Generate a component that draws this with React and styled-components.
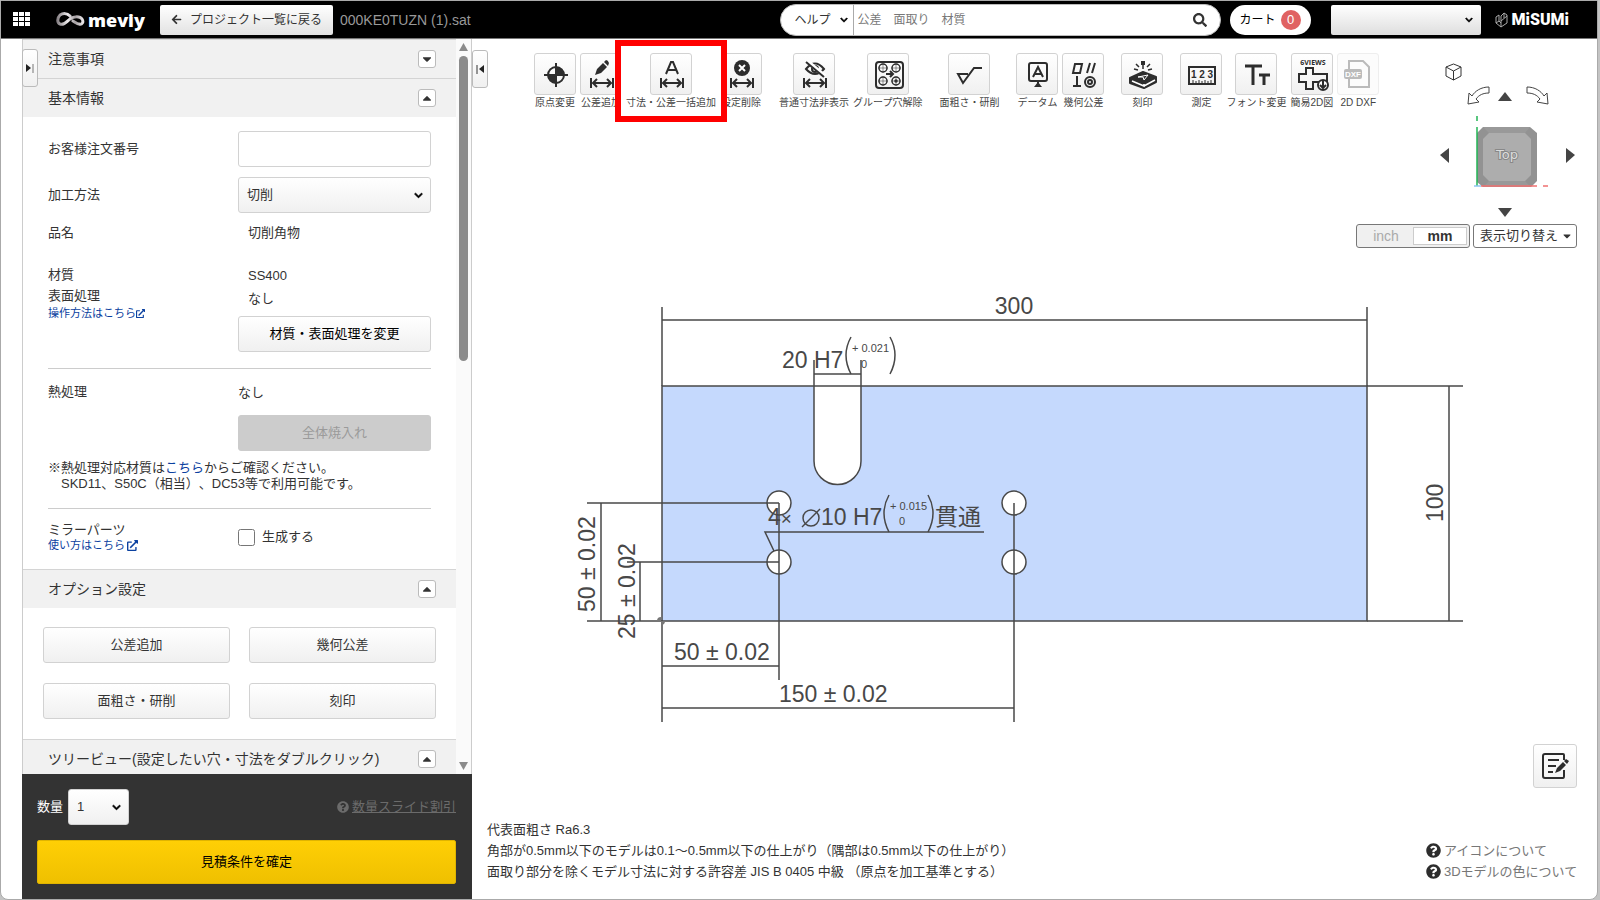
import React from "react";
import styled, { createGlobalStyle, css } from "styled-components";
import {
  FaArrowLeft,
  FaCaretDown,
  FaCaretUp,
  FaChevronDown,
  FaExternalLinkAlt,
  FaQuestionCircle,
  FaSearch,
} from "react-icons/fa";

const tools = [
  [
    { label: "原点変更", icon: <OriginIcon /> },
    { label: "公差追加", icon: <ToleranceIcon /> },
    { label: "寸法・公差一括追加", icon: <BulkIcon />, marked: true },
    { label: "設定削除", icon: <DeleteIcon /> },
  ],
  [
    { label: "普通寸法非表示", icon: <HideIcon /> },
    { label: "グループ穴解除", icon: <GroupHoleIcon /> },
  ],
  [{ label: "面粗さ・研削", icon: <RoughnessIcon /> }],
  [
    { label: "データム", icon: <DatumIcon /> },
    { label: "幾何公差", icon: <GeometricIcon /> },
  ],
  [{ label: "刻印", icon: <EngraveIcon /> }],
  [
    { label: "測定", icon: <MeasureIcon /> },
    { label: "フォント変更", icon: <FontIcon /> },
    { label: "簡易2D図", icon: <SixViewsIcon /> },
    { label: "2D DXF", icon: <DxfIcon />, disabled: true },
  ],
];

const options = ["公差追加", "幾何公差", "面粗さ・研削", "刻印"];

export default function App() {
  return (
    <>
      <GlobalStyle />
      <Window>
        <Header />
        <Body>
          <Sidebar />
          <Viewer />
        </Body>
      </Window>
    </>
  );
}

function Header() {
  return (
    <TopBar>
      <MenuButton aria-label="メニュー">
        <svg width="17" height="15" viewBox="0 0 17 15" fill="#fff">
          {[0, 6, 12].map((x) =>
            [0, 5, 10].map((y) => (
              <rect key={`${x}-${y}`} x={x} y={y} width="5" height="4" />
            ))
          )}
        </svg>
      </MenuButton>
      <Brand href="#">
        <svg width="30" height="16" viewBox="0 0 30 16" fill="none">
          <defs>
            <linearGradient id="loop" x1="0" x2="1" y1="0" y2="0">
              <stop offset="0" stopColor="#8a8488" />
              <stop offset="0.4" stopColor="#efecee" />
              <stop offset="0.7" stopColor="#a39da0" />
              <stop offset="1" stopColor="#e8e4e6" />
            </linearGradient>
          </defs>
          <path
            d="M14 4C11 1 7 1 4 3C1 6 1 11 4 12C8 14 11 9 14 7C18 4 24 4 26 7C28 10 26 13 23 12C21 12 19 10 17 9"
            stroke="url(#loop)"
            strokeWidth="3"
            strokeLinecap="round"
          />
        </svg>
        meviy
      </Brand>
      <BackButton>
        <FaArrowLeft size={11} />
        プロジェクト一覧に戻る
      </BackButton>
      <FileName>000KE0TUZN (1).sat</FileName>
      <SearchBox>
        <HelpLabel>
          <HelpSelect aria-label="検索対象">
            <option>ヘルプ</option>
          </HelpSelect>
          <FaChevronDown size={8} />
        </HelpLabel>
        <input type="text" aria-label="検索" placeholder="公差　面取り　材質" />
        <button aria-label="検索する">
          <FaSearch size={14} />
        </button>
      </SearchBox>
      <CartButton>
        カート<span>0</span>
      </CartButton>
      <AccountWrap>
        <Select aria-label="アカウント" $flat>
          <option></option>
        </Select>
        <FaChevronDown size={8} />
      </AccountWrap>
      <Maker href="#">
        <svg
          width="13"
          height="16"
          viewBox="0 0 13 16"
          fill="none"
          stroke="#aaa"
        >
          <path d="M1 5L4 3V9L1 11ZM1 11L6 15L12 11V3L9 1L6 4V15M6 9L12 4M4 9L6 11M9 1V6" />
        </svg>
        MiSUMi
      </Maker>
    </TopBar>
  );
}

function SectionHead({ title, open }) {
  return (
    <Head>
      <h2>{title}</h2>
      <Toggle aria-label={title} aria-expanded={open}>
        {open ? <FaCaretUp size={14} /> : <FaCaretDown size={14} />}
      </Toggle>
    </Head>
  );
}

function Sidebar() {
  return (
    <Side>
      <SideScroll>
        <SideContent>
          <SectionHead title="注意事項" open={false} />
          <SectionHead title="基本情報" open />
          <BasicInfo>
            <Field>
              <label htmlFor="order">お客様注文番号</label>
              <TextInput id="order" type="text" />
            </Field>
            <Field>
              <label htmlFor="process">加工方法</label>
              <SelectWrap>
                <Select id="process">
                  <option>切削</option>
                </Select>
                <FaChevronDown size={9} />
              </SelectWrap>
            </Field>
            <Field>
              <span>品名</span>
              <Value>切削角物</Value>
            </Field>
            <Material>
              <LeftStack>
                <div>材質</div>
                <div>表面処理</div>
                <SmallLink href="#">
                  操作方法はこちら
                  <FaExternalLinkAlt size={9} />
                </SmallLink>
              </LeftStack>
              <RightStack>
                <Value>SS400</Value>
                <Value>なし</Value>
                <ChangeButton>材質・表面処理を変更</ChangeButton>
              </RightStack>
            </Material>
            <Rule />
            <Heat>
              <LeftStack>熱処理</LeftStack>
              <RightStack>
                <div>なし</div>
                <HeatButton disabled>全体焼入れ</HeatButton>
              </RightStack>
            </Heat>
            <Note>
              ※熱処理対応材質は<a href="#">こちら</a>からご確認ください。
              <br />
              {"\u3000SKD11、S50C（相当）、DC53等で利用可能です。"}
            </Note>
            <Rule />
            <Mirror>
              <div>
                ミラーパーツ
                <SmallLink href="#" $spaced>
                  使い方はこちら
                  <FaExternalLinkAlt size={11} />
                </SmallLink>
              </div>
              <CheckLabel>
                <input type="checkbox" />
                生成する
              </CheckLabel>
            </Mirror>
          </BasicInfo>
          <SectionHead title="オプション設定" open />
          <OptionGrid>
            {options.map((name) => (
              <PlainButton key={name}>{name}</PlainButton>
            ))}
          </OptionGrid>
          <SectionHead title="ツリービュー(設定したい穴・寸法をダブルクリック)" open />
        </SideContent>
        <Scrollbar>
          <svg width="9" height="8" viewBox="0 0 9 8" fill="#8b8b8b">
            <path d="M4.500 0L9 8H0Z" />
          </svg>
          <Thumb />
          <svg width="9" height="8" viewBox="0 0 9 8" fill="#8b8b8b">
            <path d="M0 0H9L4.500 8Z" />
          </svg>
        </Scrollbar>
      </SideScroll>
      <Order>
        <OrderRow>
          <label htmlFor="qty">数量</label>
          <QtyWrap>
            <Select id="qty">
              <option>1</option>
            </Select>
            <FaChevronDown size={9} />
          </QtyWrap>
          <DiscountLink href="#">
            <FaQuestionCircle size={12} />
            <span>数量スライド割引</span>
          </DiscountLink>
        </OrderRow>
        <ConfirmButton>見積条件を確定</ConfirmButton>
      </Order>
      <SideHandle aria-label="パネルを開く">
        <svg width="8" height="9" viewBox="0 0 8 9">
          <path d="M0 0L5 4L0 8Z" fill="#222" />
          <path d="M7 0V9" stroke="#777" />
        </svg>
      </SideHandle>
    </Side>
  );
}

function Viewer() {
  return (
    <Main>
      <ViewerTop>
        <MainHandle aria-label="パネルを閉じる">
          <svg width="8" height="9" viewBox="0 0 8 9">
            <path d="M8 0L3 4L8 8Z" fill="#222" />
            <path d="M1 0V9" stroke="#333" />
          </svg>
        </MainHandle>
        <Toolbar>
          {tools.map((group) => (
            <ToolGroup key={group[0].label}>
              {group.map((tool) => (
                <Tool
                  key={tool.label}
                  $marked={tool.marked}
                  disabled={tool.disabled}
                >
                  <ToolFace>{tool.icon}</ToolFace>
                  <ToolName>{tool.label}</ToolName>
                </Tool>
              ))}
            </ToolGroup>
          ))}
        </Toolbar>
        <ViewCompass />
      </ViewerTop>
      <UnitRow>
        <UnitSwitch>
          <button>inch</button>
          <button aria-pressed="true">mm</button>
        </UnitSwitch>
        <DisplayButton>
          表示切り替え
          <FaCaretDown size={12} />
        </DisplayButton>
      </UnitRow>
      <Drawing />
      <ViewerBottom>
        <Remarks>
          <p>代表面粗さ Ra6.3</p>
          <p>
            角部が0.5mm以下のモデルは0.1〜0.5mm以下の仕上がり（隅部は0.5mm以下の仕上がり）
          </p>
          <p>
            面取り部分を除くモデル寸法に対する許容差 JIS B 0405 中級
            （原点を加工基準とする）
          </p>
        </Remarks>
        <BottomRight>
          <NoteButton aria-label="メモ">
            <NoteIcon />
          </NoteButton>
          <HelpLinks>
            <a href="#">
              <FaQuestionCircle size={15} />
              アイコンについて
            </a>
            <a href="#">
              <FaQuestionCircle size={15} />
              3Dモデルの色について
            </a>
          </HelpLinks>
        </BottomRight>
      </ViewerBottom>
    </Main>
  );
}

function ViewCompass() {
  return (
    <Compass>
      <IconButton aria-label="等角図" $area="iso">
        <svg width="17" height="18" viewBox="0 0 17 18" fill="none" stroke="#333">
          <path d="M8.500 1L16 4V13L8.500 17L1 13V4ZM1 4L8.500 8L16 4M8.500 8V17" />
        </svg>
      </IconButton>
      <IconButton aria-label="左回転" $area="ccw">
        <svg width="24" height="20" viewBox="0 0 24 20" fill="none" stroke="#444">
          <path d="M22 1C14 1 8 5 5 10L2 7L1 18L12 16L9 13C12 9 16 7 22 7Z" />
        </svg>
      </IconButton>
      <IconButton aria-label="上" $area="up">
        <svg width="14" height="9" viewBox="0 0 14 9" fill="#444">
          <path d="M7 0L14 9H0Z" />
        </svg>
      </IconButton>
      <IconButton aria-label="右回転" $area="cw">
        <svg width="24" height="20" viewBox="0 0 24 20" fill="none" stroke="#444">
          <path d="M2 1C10 1 16 5 19 10L22 7L23 18L12 16L15 13C12 9 8 7 2 7Z" />
        </svg>
      </IconButton>
      <IconButton aria-label="左" $area="left">
        <svg width="9" height="15" viewBox="0 0 9 15" fill="#444">
          <path d="M9 0V15L0 7Z" />
        </svg>
      </IconButton>
      <IconButton aria-label="Top" $area="cube">
        <svg width="82" height="80" viewBox="0 0 82 80">
          <path d="M10 18L16 12H63L70 18V66L64 72H16L10 67Z" fill="#929292" />
          <path d="M16 12H63L58 18H22ZM22 66H58L64 72H16Z" fill="#999" />
          <path d="M22 18H58L64 24V60L58 66H22L16 60V24Z" fill="#adadad" />
          <text
            x="40"
            y="44"
            textAnchor="middle"
            fontFamily="DejaVu Sans, sans-serif"
            fontSize="13"
            fill="#dcdcdc"
            stroke="#888"
            strokeWidth="2"
            paintOrder="stroke"
          >
            Top
          </text>
          <path d="M10 1V6M10 12V71" stroke="#22b455" strokeWidth="1.500" />
          <path d="M14 71H70M76 71H81" stroke="#f07070" strokeWidth="1.500" />
          <path d="M7 71H14" stroke="#8fc4f0" strokeWidth="1.500" />
        </svg>
      </IconButton>
      <IconButton aria-label="右" $area="right">
        <svg width="9" height="15" viewBox="0 0 9 15" fill="#444">
          <path d="M0 0L9 7L0 15Z" />
        </svg>
      </IconButton>
      <IconButton aria-label="下" $area="down">
        <svg width="14" height="9" viewBox="0 0 14 9" fill="#444">
          <path d="M0 0H14L7 9Z" />
        </svg>
      </IconButton>
    </Compass>
  );
}

// Plate drawing, origin at the top left corner of the plate
function Drawing() {
  const holes = [
    [117, 117],
    [117, 176],
    [352, 117],
    [352, 176],
  ];
  return (
    <Sheet viewBox="-190 -136 1125 494" role="img" aria-label="2D図面">
      <rect x="0" y="0" width="705" height="235" fill="#c5d9fd" />
      <path d="M152 0V75A23.500 23.500 0 0 0 199 75V0Z" fill="#fff" />
      {holes.map(([x, y]) => (
        <circle key={`${x}-${y}`} cx={x} cy={y} r="12" fill="#fff" />
      ))}
      <g fill="none" stroke="#484848" strokeWidth="1.500">
        <path d="M0 0V235H705V0Z" />
        <path d="M152 0V75A23.500 23.500 0 0 0 199 75V0" />
        <path d="M0 0V-79M705 0V-79M0 -66H705" />
        <path d="M152 0V-26M199 0V-26M152 -12H199" />
        <path d="M705 0H801M705 235H801M787 0V235" />
        <path d="M-75 117H117M-75 235H0M-61 117V235" />
        <path d="M-35 176H117M-22 176V235" />
        <path d="M117 117V294M0 280H117" />
        <path d="M352 117V336M0 235V336M0 322H352" />
        <path d="M322 146H103L112 165" />
        <path d="M189 -49Q179 -31 189 -12M228 -49Q238 -31 228 -12" />
        <path d="M227 109Q217 127 227 146M266 109Q276 127 266 146" />
        <circle cx="149" cy="132" r="8" />
        <path d="M140 141L158 123" />
        {holes.map(([x, y]) => (
          <circle key={`${x}-${y}`} cx={x} cy={y} r="12" />
        ))}
      </g>
      <path d="M-5 235A4 4 0 0 1 -1 231V235H3A4 4 0 0 1 -1 239V235Z" fill="#777" />
      <g fill="#484848" fontSize="23">
        <text x="352" y="-72" textAnchor="middle">
          300
        </text>
        <text x="120" y="-18">
          20 H7
        </text>
        <text x="106" y="139">
          4<tspan fontSize="19">×</tspan>
        </text>
        <text x="159" y="139">
          10 H7
        </text>
        <text x="273" y="139">
          貫通
        </text>
        <text x="12" y="274">
          50 ± 0.02
        </text>
        <text x="117" y="316">
          150 ± 0.02
        </text>
        <text transform="translate(-67 226) rotate(-90)">50 ± 0.02</text>
        <text transform="translate(-27 253) rotate(-90)">25 ± 0.02</text>
        <text transform="translate(781 136) rotate(-90)">100</text>
      </g>
      <g fill="#484848" fontSize="11">
        <text x="190" y="-34">
          + 0.021
        </text>
        <text x="199" y="-18">
          0
        </text>
        <text x="228" y="124">
          + 0.015
        </text>
        <text x="237" y="139">
          0
        </text>
      </g>
    </Sheet>
  );
}

/* ---- tool icons, all on a 42 x 42 grid ---- */

function Icon({ children }) {
  return (
    <svg
      width="42"
      height="42"
      viewBox="0 0 42 42"
      fill="none"
      stroke="#2d2d2d"
      strokeWidth="2"
    >
      {children}
    </svg>
  );
}

function Span() {
  return (
    <path d="M10 24V34M32 24V34M12 29H30M16 25L12 29L16 33M26 25L30 29L26 33" />
  );
}

function OriginIcon() {
  return (
    <Icon>
      <circle cx="21" cy="21" r="8" />
      <path d="M21 21V13A8 8 0 0 1 29 21ZM21 21V29A8 8 0 0 1 13 21Z" fill="#2d2d2d" stroke="none" />
      <path d="M21 9V33M9 21H33" />
    </Icon>
  );
}

function ToleranceIcon() {
  return (
    <Icon>
      <path d="M14 21L16 15L22 9L26 13L20 19ZM23 8L25 6Q27 6 28 9L27 12Z" fill="#2d2d2d" stroke="none" />
      <Span />
    </Icon>
  );
}

function BulkIcon() {
  return (
    <Icon>
      <path d="M15 20L20 8H22L27 20M17 16H25" />
      <Span />
    </Icon>
  );
}

function DeleteIcon() {
  return (
    <Icon>
      <circle cx="21" cy="14" r="8" fill="#2d2d2d" stroke="none" />
      <path d="M18 11L24 17M24 11L18 17" stroke="#fff" />
      <Span />
    </Icon>
  );
}

function HideIcon() {
  return (
    <Icon>
      <path d="M12 15Q21 4 30 15Q21 25 12 15Z" />
      <circle cx="21" cy="15" r="3" />
      <path d="M13 7L31 22" stroke="#fff" strokeWidth="4" />
      <path d="M12 8L30 23" />
      <Span />
    </Icon>
  );
}

function GroupHoleIcon() {
  return (
    <Icon>
      <rect x="8" y="8" width="27" height="26" rx="3" />
      <g strokeWidth="1.500">
        <circle cx="15" cy="14" r="4" />
        <circle cx="28" cy="14" r="4" />
        <circle cx="15" cy="27" r="4" />
        <circle cx="28" cy="27" r="4" />
        <circle cx="28" cy="27" r="1" />
        <path d="M15 9V19M10 14H20M28 9V19M23 14H33M15 22V32M10 27H20M28 22V32M23 27H33" strokeWidth="0.500" />
      </g>
      <path d="M18 20H25M22 17L25 20L22 23" />
    </Icon>
  );
}

function RoughnessIcon() {
  return (
    <Icon>
      <path d="M19 20H9L14 29L25 14H33" />
    </Icon>
  );
}

function DatumIcon() {
  return (
    <Icon>
      <rect x="12" y="9" width="18" height="18" rx="2" />
      <path d="M16 23L21 13L26 23M18 20H24M21 27V30" />
      <path d="M21 28L25 33H17Z" fill="#2d2d2d" stroke="none" />
    </Icon>
  );
}

function GeometricIcon() {
  return (
    <Icon>
      <path d="M10 19L12 10H19L17 19ZM24 19L27 9M29 19L32 9M10 32H18M14 22V32" />
      <circle cx="27" cy="28" r="5" />
      <circle cx="27" cy="28" r="2" />
    </Icon>
  );
}

function EngraveIcon() {
  return (
    <Icon>
      <path d="M8 24L21 18L34 23V28L22 34L8 29Z" fill="#2d2d2d" strokeLinejoin="round" />
      <path d="M10 27L22 32V30M22 32L33 26" stroke="#fff" strokeWidth="1.500" />
      <path d="M16 23L26 21L22 26L21 23Z" stroke="#fff" strokeWidth="1" />
      <path d="M21 7V11" strokeWidth="4" />
      <path d="M21 11V15M14 10L17 13M12 15L16 16M28 10L25 13M30 15L26 16" strokeWidth="1.500" />
    </Icon>
  );
}

function MeasureIcon() {
  return (
    <Icon>
      <rect x="8" y="13" width="26" height="17" />
      <path d="M12 30V26M15 30V27M18 30V26M21 30V27M24 30V26M27 30V27M30 30V26" strokeWidth="1" />
      <text x="21" y="24" textAnchor="middle" fontSize="10" fontWeight="700" fill="#2d2d2d" stroke="none">
        1 2 3
      </text>
    </Icon>
  );
}

function FontIcon() {
  return (
    <Icon>
      <path d="M9 12H26M17 12V31M23 21H34M28 21V31" strokeWidth="3" />
    </Icon>
  );
}

function SixViewsIcon() {
  return (
    <Icon>
      <text
        x="21"
        y="11"
        textAnchor="middle"
        fontFamily="Open Sans, sans-serif"
        fontSize="7"
        fontWeight="700"
        fill="#2d2d2d"
        stroke="none"
      >
        6VIEWS
      </text>
      <path d="M14 14H21V20H35V28H21V35H14V28H7V20H14Z" />
      <circle cx="31" cy="31" r="5" fill="#fff" />
      <path d="M31 27V34M28 31L31 34L34 31" />
    </Icon>
  );
}

function DxfIcon() {
  return (
    <Icon>
      <path d="M11 16V7H25L31 13V33H11V24" stroke="#bbb" />
      <rect x="6" y="15" width="18" height="10" rx="2" fill="#bbb" stroke="none" />
      <text x="15" y="23" textAnchor="middle" fontSize="8" fontWeight="700" fill="#fff" stroke="none">
        DXF
      </text>
    </Icon>
  );
}

function NoteIcon() {
  return (
    <svg width="28" height="28" viewBox="0 0 28 28" fill="none" stroke="#2d2d2d" strokeWidth="2">
      <path d="M23 8V3Q23 2 22 2H4Q2 2 2 4V24Q2 26 4 26H22Q23 26 23 24V18" />
      <path d="M7 8H18M7 14H15M7 20H12" />
      <path d="M14 21L16 16L22 10L25 13L19 19ZM23 9L25 7L28 9L26 12Z" fill="#2d2d2d" stroke="none" />
    </svg>
  );
}

/* ---- styles ---- */

const GlobalStyle = createGlobalStyle`
  * {
    box-sizing: border-box;
  }
  body {
    margin: 0;
    background: #c4c4c4;
    color: #333;
    font-family: "Liberation Sans", "Noto Sans CJK JP", sans-serif;
    font-size: 13px;
    line-height: 20px;
    text-spacing-trim: space-all;
  }
  button, input, select {
    margin: 0;
    font: inherit;
    color: inherit;
  }
  button {
    padding: 0;
    cursor: pointer;
  }
  a {
    color: #0b41a0;
    text-decoration: none;
  }
  svg {
    display: block;
    flex: none;
  }
`;

const raised = css`
  background: linear-gradient(#fff, #f0f0f0);
  border: 1px solid #d2d2d2;
  border-radius: 3px;
`;

const Window = styled.div`
  display: flex;
  flex-direction: column;
  height: 100vh;
  margin-right: 2px;
  border: 1px solid #aaa;
  border-radius: 0 0 8px 8px;
  background: #fff;
  overflow: hidden;
`;

const TopBar = styled.header`
  display: flex;
  align-items: center;
  flex: none;
  height: 38px;
  padding: 0 28px 0 12px;
  background: #000;
  border-bottom: 1px solid #777;
  font-size: 12px;
`;

const MenuButton = styled.button`
  border: 0;
  background: none;
`;

const Brand = styled.a`
  display: flex;
  align-items: center;
  gap: 2px;
  width: 104px;
  margin-left: 26px;
  color: #fff;
  font-family: "Open Sans", sans-serif;
  font-size: 18px;
  font-weight: 800;
`;

const BackButton = styled.button`
  display: flex;
  align-items: center;
  justify-content: center;
  gap: 8px;
  width: 173px;
  height: 30px;
  border: 0;
  border-radius: 2px;
  background: linear-gradient(#fff, #e2e2e2);
`;

const FileName = styled.span`
  margin-left: 7px;
  color: #999;
  font-size: 14px;
`;

const SearchBox = styled.div`
  display: flex;
  align-items: center;
  width: 441px;
  height: 32px;
  margin-left: auto;
  padding-right: 13px;
  border: 1px solid #bbb;
  border-radius: 16px;
  background: #fff;
  overflow: hidden;
  input {
    flex: 1;
    padding: 0 4px;
    border: 0;
    outline: 0;
  }
  input::placeholder {
    color: #777;
    opacity: 1;
  }
  button {
    border: 0;
    background: none;
  }
`;

const SelectWrap = styled.div`
  position: relative;
  svg {
    position: absolute;
    top: 50%;
    right: 8px;
    margin-top: -4px;
    color: #000;
    stroke: #000;
    stroke-width: 40px;
    pointer-events: none;
  }
`;

const HelpLabel = styled(SelectWrap)`
  width: 73px;
  height: 30px;
  border-right: 1px solid #aaa;
  svg {
    right: 5px;
  }
`;

const HelpSelect = styled.select`
  width: 100%;
  height: 30px;
  padding-left: 14px;
  border: 0;
  background: none;
  appearance: none;
`;

const CartButton = styled.button`
  display: flex;
  align-items: center;
  justify-content: space-between;
  width: 81px;
  height: 30px;
  margin-left: 9px;
  padding: 0 10px;
  border: 0;
  border-radius: 15px;
  background: #fff;
  color: #000;
  span {
    width: 20px;
    border-radius: 10px;
    background: #e06262;
    color: #fff;
    font-size: 13px;
  }
`;

const AccountWrap = styled(SelectWrap)`
  width: 150px;
  margin-left: 20px;
`;

const Select = styled.select`
  ${raised}
  display: block;
  width: 100%;
  height: 36px;
  padding: 0 8px;
  appearance: none;
  ${(props) =>
    props.$flat &&
    css`
      height: 30px;
      border: 0;
      border-radius: 2px;
      background: linear-gradient(#fff, #dedede);
    `}
`;

const Maker = styled.a`
  display: flex;
  align-items: center;
  gap: 4px;
  margin-left: 14px;
  color: #fff;
  font-family: Roboto, sans-serif;
  font-size: 16px;
  font-weight: 900;
`;

const Body = styled.div`
  display: flex;
  flex: 1;
  min-height: 0;
`;

const Side = styled.aside`
  position: relative;
  display: flex;
  flex-direction: column;
  flex: none;
  width: 450px;
  margin-left: 21px;
  border: 1px solid #ccc;
  border-width: 0 1px;
`;

const SideScroll = styled.div`
  display: flex;
  flex: 1;
  min-height: 0;
`;

const SideContent = styled.div`
  flex: 1;
  overflow: hidden;
`;

const Head = styled.div`
  display: flex;
  align-items: center;
  justify-content: space-between;
  height: 39px;
  padding: 0 20px 0 25px;
  border-top: 1px solid #d4d4d4;
  background: #f1f1f1;
  h2 {
    margin: 0;
    font-size: 14px;
    font-weight: 400;
  }
`;

const Toggle = styled.button`
  display: grid;
  place-items: center;
  width: 18px;
  height: 18px;
  border: 1px solid #bbb;
  border-radius: 3px;
  background: #fff;
`;

const BasicInfo = styled.div`
  padding: 14px 25px 17px;
`;

const Field = styled.div`
  display: grid;
  grid-template-columns: 190px 1fr;
  align-items: center;
  margin-bottom: 10px;
`;

const TextInput = styled.input`
  width: 100%;
  height: 36px;
  padding: 0 8px;
  border: 1px solid #d2d2d2;
  border-radius: 3px;
`;

const Value = styled.div`
  padding-left: 10px;
`;

const Material = styled.div`
  display: grid;
  grid-template-columns: 190px 1fr;
  margin-top: 21px;
`;

const LeftStack = styled.div`
  line-height: 21px;
`;

const RightStack = styled.div`
  line-height: 23px;
`;

const SmallLink = styled.a`
  display: flex;
  align-items: center;
  gap: ${(props) => (props.$spaced ? "2px" : "0")};
  font-size: 11px;
  line-height: 14px;
`;

const PlainButton = styled.button`
  ${raised}
  width: 100%;
  height: 36px;
  line-height: 20px;
`;

const ChangeButton = styled(PlainButton)`
  margin-top: 6px;
  color: #000;
`;

const HeatButton = styled(PlainButton)`
  margin-top: 11px;
  background: #ccc;
  border-color: #ccc;
  color: #9a9a9a;
`;

const Rule = styled.hr`
  height: 1px;
  margin: 16px 0 0;
  border: 0;
  background: #ccc;
`;

const Heat = styled.div`
  display: grid;
  grid-template-columns: 190px 1fr;
  padding-top: 12px;
`;

const Note = styled.p`
  margin: 9px 0 0;
  line-height: 16px;
  white-space: nowrap;
`;

const Mirror = styled.div`
  display: grid;
  grid-template-columns: 190px 1fr;
  padding-top: 13px;
  line-height: 16px;
`;

const CheckLabel = styled.label`
  display: flex;
  align-items: center;
  gap: 7px;
  input {
    width: 17px;
    height: 17px;
  }
`;

const OptionGrid = styled.div`
  display: grid;
  grid-template-columns: 1fr 1fr;
  gap: 20px 19px;
  padding: 19px 20px 20px;
`;

const Scrollbar = styled.div`
  display: flex;
  flex-direction: column;
  align-items: center;
  flex: none;
  width: 15px;
  padding: 4px 0;
  background: #fafafa;
`;

const Thumb = styled.div`
  width: 9px;
  height: 42%;
  margin: 5px 0 auto;
  border-radius: 5px;
  background: #8b8b8b;
`;

const Order = styled.div`
  flex: none;
  margin: 0 -1px 0 -1px;
  padding: 15px 16px 15px 15px;
  background: #333;
  color: #fff;
`;

const OrderRow = styled.div`
  display: flex;
  align-items: center;
  gap: 5px;
  margin-bottom: 15px;
`;

const QtyWrap = styled(SelectWrap)`
  width: 61px;
  color: #333;
`;

const DiscountLink = styled.a`
  display: flex;
  align-items: center;
  gap: 3px;
  margin-left: auto;
  color: #6b6b6b;
  span {
    text-decoration: underline;
  }
`;

const ConfirmButton = styled.button`
  width: 100%;
  height: 44px;
  border: 1px solid #e0b400;
  border-radius: 2px;
  background: linear-gradient(#ffcf05, #efc000);
  color: #000;
`;

const SideHandle = styled.button`
  position: absolute;
  top: 10px;
  left: -1px;
  display: grid;
  place-items: center;
  width: 16px;
  height: 38px;
  border: 1px solid #bbb;
  border-radius: 3px;
  background: linear-gradient(#fff, #f0f0f0);
`;

const Main = styled.main`
  display: flex;
  flex-direction: column;
  flex: 1;
  min-width: 0;
`;

const ViewerTop = styled.div`
  display: flex;
  align-items: flex-start;
  flex: none;
  padding-right: 22px;
`;

const MainHandle = styled.button`
  ${raised}
  display: grid;
  place-items: center;
  flex: none;
  width: 16px;
  height: 38px;
  margin-top: 11px;
  border-color: #bbb;
`;

const Toolbar = styled.div`
  display: flex;
  gap: 17px;
  margin: 14px 0 0 46px;
`;

const ToolGroup = styled.div`
  display: flex;
  gap: 4px;
`;

const Tool = styled.button`
  position: relative;
  display: flex;
  flex-direction: column;
  align-items: center;
  min-width: 42px;
  border: 0;
  background: none;
  white-space: nowrap;
  ${(props) =>
    props.$marked &&
    css`
      z-index: 1;
      &::before {
        content: "";
        position: absolute;
        z-index: -1;
        top: -13px;
        right: -11px;
        bottom: -12px;
        left: -11px;
        border: 6px solid #f00;
        background: #fff;
      }
    `}
`;

const ToolFace = styled.span`
  ${raised}
  display: grid;
  place-items: center;
  width: 42px;
  height: 42px;
  ${Tool}:disabled & {
    border-color: #eee;
    background: #fcfcfc;
  }
`;

const ToolName = styled.span`
  margin-top: 1px;
  color: #444;
  font-size: 10px;
  line-height: 14px;
`;

const Compass = styled.div`
  display: grid;
  flex: none;
  grid-template-columns: 9px 18px 24px 7px 14px 13px 24px 17px 9px;
  grid-template-areas:
    "iso iso . . . . . . ."
    ". . ccw . up . cw . ."
    "left . cube cube cube cube cube . right"
    ". . . . down . . . .";
  grid-template-rows: 21px 28px 90px 24px;
  place-items: center;
  margin: 22px 0 0 auto;
`;

const IconButton = styled.button`
  grid-area: ${(props) => props.$area};
  border: 0;
  background: none;
`;

const UnitRow = styled.div`
  display: flex;
  justify-content: flex-end;
  flex: none;
  gap: 3px;
  padding: 0 20px 2px 0;
`;

const UnitSwitch = styled.div`
  display: grid;
  grid-template-columns: 1fr 1fr;
  width: 114px;
  height: 24px;
  padding: 2px;
  border: 1px solid #777;
  border-radius: 3px;
  background: #f0f0f0;
  button {
    border: 0;
    background: none;
    color: #aaa;
    font-size: 14px;
    line-height: 16px;
  }
  button[aria-pressed="true"] {
    border: 1px solid #ccc;
    background: #fff;
    color: #333;
    font-weight: 700;
  }
`;

const DisplayButton = styled.button`
  display: flex;
  align-items: center;
  justify-content: space-between;
  width: 104px;
  height: 24px;
  padding: 0 3px 0 6px;
  border: 1px solid #777;
  border-radius: 3px;
  background: #fff;
`;

const Sheet = styled.svg`
  flex: 1;
  width: 100%;
  min-height: 0;
`;

const ViewerBottom = styled.div`
  display: flex;
  align-items: flex-end;
  justify-content: space-between;
  flex: none;
  padding: 0 20px 17px 15px;
`;

const Remarks = styled.div`
  line-height: 21px;
  p {
    margin: 0;
  }
`;

const BottomRight = styled.div`
  display: flex;
  flex-direction: column;
  align-items: flex-end;
  gap: 52px;
`;

const NoteButton = styled.button`
  ${raised}
  display: grid;
  place-items: center;
  width: 44px;
  height: 44px;
`;

const HelpLinks = styled.div`
  width: 151px;
  line-height: 21px;
  white-space: nowrap;
  a {
    display: flex;
    align-items: center;
    gap: 3px;
    color: #777;
  }
  svg {
    color: #2d2d2d;
  }
`;
